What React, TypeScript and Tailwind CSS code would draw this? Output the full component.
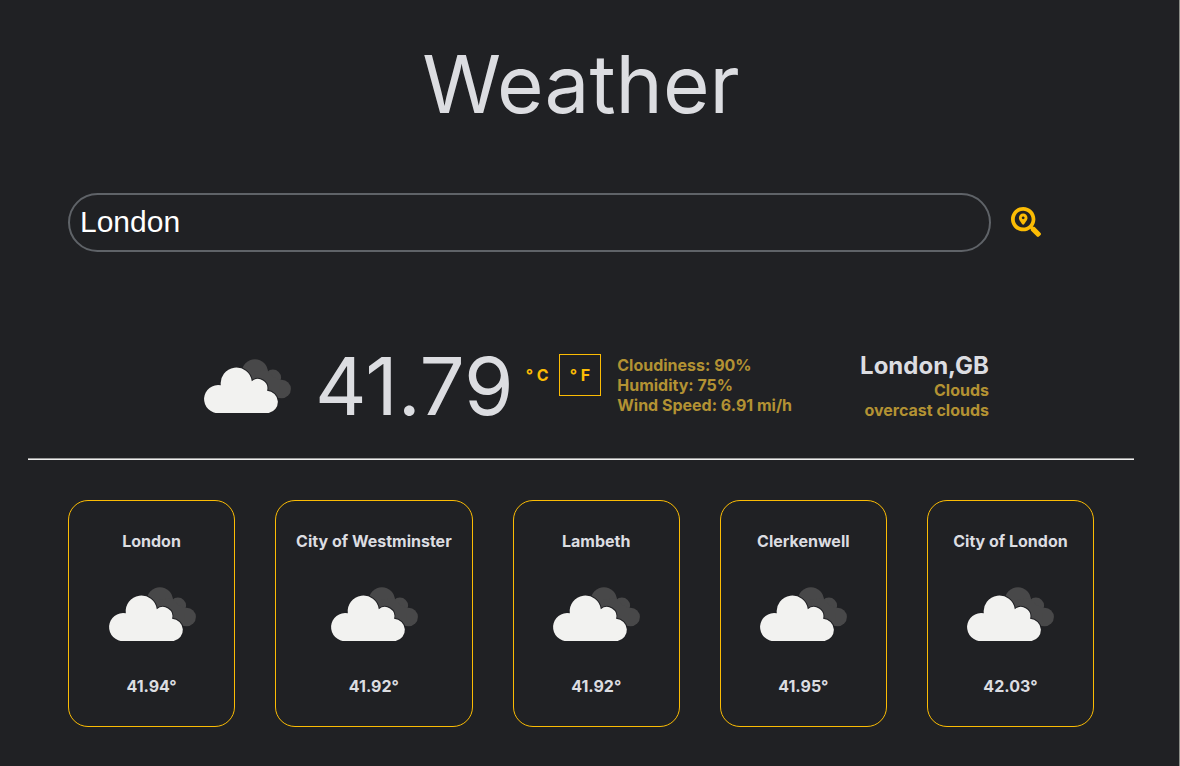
import { useState } from "react";
import { FaSearchLocation } from "react-icons/fa";

const nearby = [
  { name: "London", temp: "41.94" },
  { name: "City of Westminster", temp: "41.92" },
  { name: "Lambeth", temp: "41.92" },
  { name: "Clerkenwell", temp: "41.95" },
  { name: "City of London", temp: "42.03" },
];

function CloudsIcon() {
  return (
    <svg viewBox="0 0 100 100" className="size-[100px] shrink-0" role="img" aria-label="overcast clouds">
      <g fill="#484849">
        <circle cx="57.9" cy="36.3" r="13" />
        <circle cx="75.9" cy="41.8" r="8.2" />
        <circle cx="84.6" cy="53" r="9.3" />
        <path d="M57 36 L70 34 L76 41 L83 44 L82 62 L66 55 Z" />
      </g>
      <path
        d="M22 77 A14 14 0 1 1 23.8 49.3 A15.6 15.6 0 1 1 54.8 45.2 A9.5 9.5 0 0 1 70.1 54.8 A11.2 11.2 0 0 1 71.7 77 Z"
        fill="#f2f2f0"
        stroke="#202124"
        strokeWidth="2"
        paintOrder="stroke"
      />
    </svg>
  );
}

export default function App() {
  const [city, setCity] = useState("London");

  return (
    <div className="min-h-screen border-r border-[#8c8e88] bg-[#202124] pr-[45px] pl-7 font-['Inter',sans-serif] text-base font-bold text-[#dcdde1]">
      <main className="pt-9 pb-10">
        <h1 className="text-center text-[80px] leading-[96px] font-normal">Weather</h1>

        <form className="mt-[61px] flex items-start px-10" onSubmit={(e) => e.preventDefault()}>
          <input
            aria-label="City"
            value={city}
            onChange={(e) => setCity(e.target.value)}
            className="h-[59px] min-w-0 flex-1 rounded-[30px] border-2 border-[#5f6368] bg-transparent px-[10px] pb-[2px] font-['Liberation_Sans',Arial,sans-serif] text-[30px] font-normal text-white outline-none"
          />
          <button type="submit" aria-label="Search" className="mt-[14px] mr-[53px] ml-5 text-[#fbbc04]">
            <FaSearchLocation size={30} />
          </button>
        </form>

        <section className="mt-[84px] flex h-[100px] items-start justify-center pl-6">
          <CloudsIcon />
          <p className="ml-[18px] text-[80px] leading-[100px] font-normal">41.79</p>
          <div className="mt-[18px] ml-[2px] flex">
            <button type="button" className="h-[42px] px-[10px] text-[#fbbc04]">° C</button>
            <button type="button" className="h-[42px] border border-[#fbbc04] px-[10px] text-[#fbbc04]">° F</button>
          </div>
          <ul className="mt-[19px] ml-4 leading-5 text-[#b39233]">
            <li>Cloudiness: 90%</li>
            <li>Humidity: 75%</li>
            <li>Wind Speed: 6.91 mi/h</li>
          </ul>
          <div className="mt-[15px] ml-[68px] text-right leading-5 text-[#b39233]">
            <h2 className="text-2xl leading-[29px] text-[#dcdde1]">London,GB</h2>
            <p>Clouds</p>
            <p>overcast clouds</p>
          </div>
        </section>

        <hr className="mt-[22px] border-t border-b border-t-[#9a9a9a] border-b-[#eeeeee]" />

        <section className="mt-10 flex gap-10 px-10">
          {nearby.map((place) => (
            <article
              key={place.name}
              className="flex flex-1 flex-col items-center rounded-[20px] border border-[#fbbc04] px-5 pt-[30px] pb-[30px] leading-5 whitespace-nowrap"
            >
              <h3>{place.name}</h3>
              <div className="mt-[13px] mb-3">
                <CloudsIcon />
              </div>
              <p>{place.temp}°</p>
            </article>
          ))}
        </section>
      </main>
    </div>
  );
}
